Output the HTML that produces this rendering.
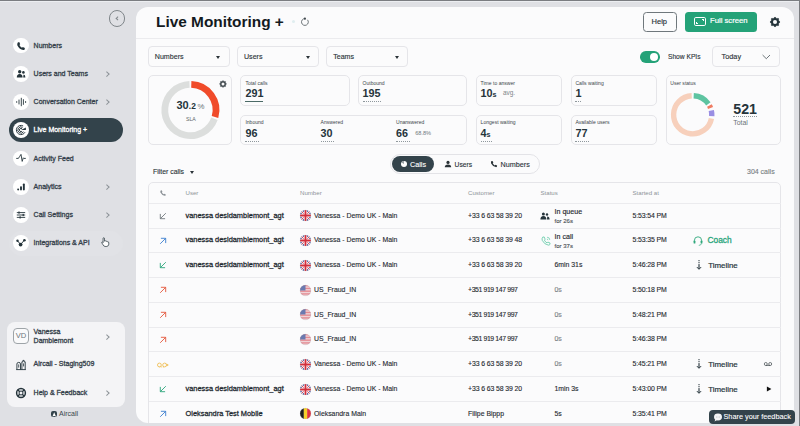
<!DOCTYPE html>
<html><head><meta charset="utf-8">
<style>
*{box-sizing:border-box;margin:0;padding:0}
html,body{width:800px;height:426px;overflow:hidden}
body{background:#dfe0e4;font-family:"Liberation Sans",sans-serif;color:#1f2a30;position:relative}
.a{position:absolute;white-space:nowrap}
svg.a{overflow:visible}
#topline{left:0;top:0;width:800px;height:1.1px;background:#7b7d81}
#topline2{left:0;top:1.1px;width:800px;height:1.2px;background:#eceef1}
.nav{left:13.1px;width:15.8px;height:15.8px;border-radius:50%;background:#fff}
.navt{left:33.6px;font-size:7px;color:#34404a;line-height:8px;-webkit-text-stroke:0.3px #34404a}
.chev{width:3.6px;height:3.6px;border-right:1px solid #8d9398;border-top:1px solid #8d9398;transform:rotate(45deg)}
#main{left:136px;top:6.5px;width:657.5px;height:416px;border-radius:12px;background:#fbfbfc;overflow:hidden}
#inner{left:-136px;top:-6.5px;width:800px;height:426px}
.dd{height:20.3px;border:1px solid #e5e5e9;border-radius:4px}
.ddt{font-size:7.1px;color:#2a3338;line-height:8px;-webkit-text-stroke:0.12px currentColor}
.caret{width:0;height:0;border-left:2.9px solid transparent;border-right:2.9px solid transparent;border-top:3px solid #2a3338}
.card{border:1px solid #e5e5e9;border-radius:5px}
.lbl{font-size:5.05px;color:#3c464b;line-height:6px}
.big{font-size:10.8px;font-weight:bold;color:#25343b;line-height:12px}
.dots{height:0;border-top:1px dotted #8f989d}
.th{font-size:6.1px;color:#8d9398;line-height:6px}
.td{font-size:6.9px;color:#1f2a30;line-height:8px;-webkit-text-stroke:0.12px #1f2a30}
.tdb{font-size:7.4px;color:#1f2a30;line-height:8px;-webkit-text-stroke:0.28px #1f2a30}
.rl{left:149px;width:632px;height:1px;background:#ebebee}
</style></head><body>
<div class="a" id="topline"></div><div class="a" id="topline2"></div>
<div class="a" style="left:9px;top:231px;width:114px;height:25px;border-radius:12.5px;background:#e1e2e6"></div>
<div class="a" style="left:108.5px;top:10.2px;width:16.5px;height:16.5px;border:1px solid #80868a;border-radius:50%"></div>
<div class="a" style="left:115.6px;top:16.7px;width:3.4px;height:3.4px;border-left:1px solid #80868a;border-bottom:1px solid #80868a;transform:rotate(45deg)"></div>
<div class="a nav" style="top:37.60px"></div>
<svg class="a" style="left:21px;top:45.50px" width="1" height="1"><path d="M-3.2,-3.6 L-1.8,-3.9 L-0.8,-1.7 L-1.6,-0.9 Q-0.6,1.1 1.0,1.8 L1.8,1.0 L3.9,2.0 L3.6,3.4 Q3.2,4.0 2.2,3.9 Q-1.5,3.4 -3.6,-0.6 Q-4.1,-2.3 -3.2,-3.6Z" fill="#25343b"/></svg>
<div class="a navt" style="top:41.60px;color:#34404a;-webkit-text-stroke-color:#34404a">Numbers</div>
<div class="a nav" style="top:66.00px"></div>
<svg class="a" style="left:21px;top:73.90px" width="1" height="1"><circle cx="-1.3" cy="-2.2" r="1.7" fill="#25343b"/><circle cx="2.4" cy="-1.6" r="1.3" fill="#25343b"/><path d="M-4.2,3.6 Q-4.2,0 -1.3,0 Q1.6,0 1.6,3.6Z M2.2,3.6 Q2.4,1 2.6,0.6 Q4.4,0.8 4.4,3.6Z" fill="#25343b"/></svg>
<div class="a navt" style="top:70.00px;color:#34404a;-webkit-text-stroke-color:#34404a">Users and Teams</div>
<div class="a chev" style="left:104.8px;top:72.10px"></div>
<div class="a nav" style="top:94.30px"></div>
<svg class="a" style="left:21px;top:102.20px" width="1" height="1"><g stroke="#25343b" stroke-width="0.9" stroke-linecap="round"><line x1="-4.3" y1="-0.4" x2="-4.3" y2="0.4"/><line x1="-2" y1="-2" x2="-2" y2="2"/><line x1="0.3" y1="-3.8" x2="0.3" y2="3.8"/><line x1="2.4" y1="-2.4" x2="2.4" y2="2.4"/><line x1="4.6" y1="-0.5" x2="4.6" y2="0.5"/></g></svg>
<div class="a navt" style="top:98.30px;color:#34404a;-webkit-text-stroke-color:#34404a">Conversation Center</div>
<div class="a chev" style="left:104.8px;top:100.40px"></div>
<div class="a" style="left:9px;top:118.1px;width:113.7px;height:24.4px;border-radius:12.2px;background:#33434b"></div>
<div class="a nav" style="top:122.40px"></div>
<svg class="a" style="left:21px;top:130.30px" width="1" height="1"><g fill="none" stroke="#25343b" stroke-width="0.95"><path d="M2.16,-4.06 A4.6,4.6 0 1 0 4.06,2.16"/><path d="M1.64,-2.63 A3.1,3.1 0 1 0 2.54,1.78"/><path d="M1.03,-1.23 A1.6,1.6 0 1 0 1.13,1.13"/></g><path d="M0,0 L4.9,-2.5 L4.9,0.1Z" fill="#25343b"/></svg>
<div class="a navt" style="top:126.40px;color:#ffffff;-webkit-text-stroke-color:#ffffff">Live Monitoring +</div>
<div class="a nav" style="top:150.50px"></div>
<svg class="a" style="left:21px;top:158.40px" width="1" height="1"><path d="M-4.8,0.4 L-2.6,0.4 L-1.3,-1.6 L0,-3.6 L1.2,3.4 L2.3,-0.2 L2.9,0.4 L4.8,0.4" fill="none" stroke="#25343b" stroke-width="0.9" stroke-linejoin="round"/></svg>
<div class="a navt" style="top:154.50px;color:#34404a;-webkit-text-stroke-color:#34404a">Activity Feed</div>
<div class="a nav" style="top:178.80px"></div>
<svg class="a" style="left:21px;top:186.70px" width="1" height="1"><g fill="#25343b"><rect x="-3.8" y="1.4" width="1.9" height="2" rx="0.8"/><rect x="-0.95" y="-0.8" width="1.9" height="4.2" rx="0.8"/><rect x="1.9" y="-3.6" width="1.9" height="7" rx="0.8"/></g></svg>
<div class="a navt" style="top:182.80px;color:#34404a;-webkit-text-stroke-color:#34404a">Analytics</div>
<div class="a chev" style="left:104.8px;top:184.90px"></div>
<div class="a nav" style="top:207.10px"></div>
<svg class="a" style="left:21px;top:215.00px" width="1" height="1"><g stroke="#25343b" stroke-width="0.9"><line x1="-4.2" y1="-2.4" x2="4.2" y2="-2.4"/><line x1="-4.2" y1="0" x2="4.2" y2="0"/><line x1="-4.2" y1="2.4" x2="4.2" y2="2.4"/></g><g fill="#25343b"><rect x="-2.6" y="-3.5" width="1.2" height="2.2"/><rect x="1.6" y="-1.1" width="1.2" height="2.2"/><rect x="-1.5" y="1.3" width="1.2" height="2.2"/></g></svg>
<div class="a navt" style="top:211.10px;color:#34404a;-webkit-text-stroke-color:#34404a">Call Settings</div>
<div class="a chev" style="left:104.8px;top:213.20px"></div>
<div class="a nav" style="top:235.40px"></div>
<svg class="a" style="left:21px;top:243.30px" width="1" height="1"><g stroke="#25343b" stroke-width="1"><line x1="-3.5" y1="-2.2" x2="-0.4" y2="1.4"/><line x1="-0.4" y1="1.4" x2="3.4" y2="-2.8"/></g><g fill="#25343b"><circle cx="-3.5" cy="-2.2" r="1.2"/><circle cx="-0.4" cy="1.6" r="1.9"/><circle cx="3.4" cy="-2.8" r="1.3"/></g></svg>
<div class="a navt" style="top:239.40px;color:#34404a;-webkit-text-stroke-color:#34404a">Integrations &amp; API</div>
<svg class="a" style="left:100.8px;top:237.2px" width="9.2" height="10" viewBox="0 0 10 11"><path d="M2.2,1.2 Q3,0.4 3.7,1.2 L3.8,4.6 L4.6,4.2 Q5.4,4.1 5.6,4.8 Q6.4,4.3 7,5.1 Q7.8,4.8 8.3,5.6 L8.6,7.8 Q8.4,10 6.4,10.4 L4.4,10.4 Q2.9,10.2 2.2,8.6 L0.8,6.4 Q0.5,5.6 1.3,5.4 Q1.9,5.4 2.3,6.2Z" fill="#fff" stroke="#25343b" stroke-width="0.8"/></svg>
<div class="a" style="left:7px;top:322px;width:117.6px;height:84.6px;border-radius:8px;background:#f4f4f6"></div>
<div class="a" style="left:13.4px;top:328.3px;width:15.4px;height:16px;border:0.8px solid #9ea4a8;border-radius:4px;background:#fafafb;font-size:7.6px;color:#6d767b;text-align:center;line-height:14.6px">VD</div>
<div class="a navt" style="left:33.6px;top:327.2px;line-height:9px">Vanessa<br>Damblemont</div>
<div class="a chev" style="left:104.8px;top:334.6px"></div>
<svg class="a" style="left:21px;top:364.6px" width="1" height="1"><g fill="none" stroke="#25343b" stroke-width="0.9"><path d="M-4.8,4.6 L4.8,4.6"/><path d="M-4.1,4.6 L-4.1,-1 Q-4.1,-2.6 -2.3,-2.6 Q-0.5,-2.6 -0.5,-1 L-0.5,4.6"/><path d="M0.9,4.6 L0.9,-3.2 L1.9,-3.2 L1.9,-4.6 L3.1,-4.6 L3.1,-3.2 L4.2,-3.2 L4.2,4.6"/><path d="M-2.3,-0.6 V2.6 M2.55,-1.6 V1.4" stroke-width="0.8"/></g></svg>
<div class="a navt" style="left:33.6px;top:360.1px;">Aircall - Staging509</div>
<svg class="a" style="left:21px;top:392.9px" width="1" height="1"><circle r="4.4" fill="none" stroke="#25343b" stroke-width="1.5"/><circle r="2" fill="none" stroke="#25343b" stroke-width="1"/><g stroke="#25343b" stroke-width="1.4"><line x1="-3.2" y1="-3.2" x2="-1.3" y2="-1.3"/><line x1="3.2" y1="-3.2" x2="1.3" y2="-1.3"/><line x1="-3.2" y1="3.2" x2="-1.3" y2="1.3"/><line x1="3.2" y1="3.2" x2="1.3" y2="1.3"/></g></svg>
<div class="a navt" style="left:33.6px;top:388.6px;">Help &amp; Feedback</div>
<div class="a chev" style="left:104.8px;top:391.1px"></div>
<div class="a" style="left:50.6px;top:410.5px;width:6.4px;height:6.8px;border-radius:2px;background:#33434b"></div>
<svg class="a" style="left:50.6px;top:410.5px" width="6.4" height="6.8" viewBox="0 0 6.4 6.8"><path d="M1.4,5.4 L3.2,1.3 L5,5.4 Q3.2,4.6 1.4,5.4Z" fill="#fff"/></svg>
<div class="a " style="left:59px;top:410.3px;font-size:7px;color:#3a454b;line-height:8px">Aircall</div>
<div class="a" id="main"><div class="a" id="inner">
<div class="a" style="left:136px;top:38px;width:657.5px;height:1px;background:#ebebee"></div>
<div class="a " style="left:156px;top:12.7px;font-size:15.4px;font-weight:bold;color:#141a1e;line-height:18px">Live Monitoring +</div>
<div class="a" style="left:292.2px;top:20.4px;width:3px;height:3px;border-radius:50%;background:#e0eef0"></div>
<svg class="a" style="left:304.7px;top:21.9px" width="1" height="1"><path d="M2.5,-2.2 A3.4,3.4 0 1 1 -0.3,-3.4" fill="none" stroke="#555d62" stroke-width="0.85"/><circle cx="-0.1" cy="-3.3" r="1.1" fill="#40494e"/></svg>
<div class="a" style="left:643px;top:11.6px;width:34px;height:20px;border:1px solid #6f777c;border-radius:3.5px"></div>
<div class="a " style="left:651.6px;top:17.7px;font-size:7.5px;color:#2a3338;line-height:8px;-webkit-text-stroke:0.15px #2a3338">Help</div>
<div class="a" style="left:685px;top:11.6px;width:72px;height:20px;border-radius:3.5px;background:#24a278"></div>
<div class="a" style="left:694.2px;top:17.2px;width:11.8px;height:9px;border:0.8px solid #fff;border-radius:1.8px"></div>
<div class="a" style="left:701.6px;top:18.6px;width:2.4px;height:2.4px;border-right:0.8px solid #fff;border-top:0.8px solid #fff"></div>
<div class="a" style="left:695.6px;top:22px;width:2.2px;height:2.2px;border-left:0.8px solid #fff;border-bottom:0.8px solid #fff"></div>
<div class="a " style="left:710px;top:17.4px;font-size:7.7px;color:#fff;line-height:8px;-webkit-text-stroke:0.2px #fff">Full screen</div>
<svg class="a" style="left:775.1px;top:21.5px" width="1" height="1"><path d="M0.00,-5.00 L1.49,-3.60 L3.54,-3.54 L3.60,-1.49 L5.00,0.00 L3.60,1.49 L3.54,3.54 L1.49,3.60 L0.00,5.00 L-1.49,3.60 L-3.54,3.54 L-3.60,1.49 L-5.00,0.00 L-3.60,-1.49 L-3.54,-3.54 L-1.49,-3.60Z" fill="#25343b" stroke="#25343b" stroke-width="0.6" stroke-linejoin="round"/><circle r="2.05" fill="#fbfbfc"/></svg>
<div class="a dd" style="left:147.8px;top:46.3px;width:81.8px"></div>
<div class="a ddt" style="left:154.8px;top:52.6px;">Numbers</div>
<div class="a caret" style="left:216.1px;top:55.8px"></div>
<div class="a dd" style="left:237px;top:46.3px;width:82px"></div>
<div class="a ddt" style="left:244px;top:52.6px;">Users</div>
<div class="a caret" style="left:305.5px;top:55.8px"></div>
<div class="a dd" style="left:326.2px;top:46.3px;width:82px"></div>
<div class="a ddt" style="left:333.2px;top:52.6px;">Teams</div>
<div class="a caret" style="left:394.7px;top:55.8px"></div>
<div class="a" style="left:639.6px;top:51px;width:20.4px;height:11.6px;border-radius:5.8px;background:#24a278"></div>
<div class="a" style="left:649.8px;top:52.6px;width:8.5px;height:8.5px;border-radius:50%;background:#fff"></div>
<div class="a ddt" style="left:668px;top:52.6px;font-size:6.65px">Show KPIs</div>
<div class="a dd" style="left:712.4px;top:46.3px;width:68px"></div>
<div class="a ddt" style="left:721.6px;top:52.6px;font-size:7.3px">Today</div>
<svg class="a" style="left:0;top:0" width="800" height="100"><path d="M762.6,55 L766.3,58.7 L770,55" fill="none" stroke="#4a5459" stroke-width="0.8"/></svg>
<div class="a card" style="left:148.4px;top:75px;width:84px;height:70.3px"></div>
<div class="a card" style="left:240.3px;top:74.8px;width:109.4px;height:31px"></div>
<div class="a card" style="left:358px;top:74.8px;width:109.3px;height:31px"></div>
<div class="a card" style="left:476px;top:74.8px;width:86.2px;height:31px"></div>
<div class="a card" style="left:570.8px;top:74.8px;width:86.2px;height:31px"></div>
<div class="a card" style="left:666px;top:75px;width:114.8px;height:70.3px"></div>
<div class="a card" style="left:240.3px;top:114.6px;width:227px;height:30.7px"></div>
<div class="a card" style="left:476px;top:114.6px;width:86.2px;height:30.7px"></div>
<div class="a card" style="left:570.8px;top:114.6px;width:86.2px;height:30.7px"></div>
<div class="a lbl" style="left:245.4px;top:79.6px;">Total calls</div>
<div class="a big" style="left:245.4px;top:87.39999999999999px;">291</div>
<div class="a" style="left:245.4px;top:101.1px;width:18px;height:1.1px;background:#4b6a67"></div>
<div class="a lbl" style="left:362.5px;top:79.6px;">Outbound</div>
<div class="a big" style="left:362.5px;top:87.39999999999999px;">195</div>
<div class="a dots" style="left:362.5px;top:101.1px;width:18.5px"></div>
<div class="a lbl" style="left:480.6px;top:79.6px;">Time to answer</div>
<div class="a big" style="left:480.6px;top:87.4px;">10<span style="font-size:7.2px">s</span></div>
<div class="a " style="left:503px;top:88.6px;font-size:6.4px;color:#7d8489;line-height:8px">avg.</div>
<div class="a lbl" style="left:575.4px;top:79.6px;">Calls waiting</div>
<div class="a big" style="left:575.4px;top:87.39999999999999px;">1</div>
<div class="a dots" style="left:575.4px;top:101.1px;width:5.5px"></div>
<div class="a lbl" style="left:670.3px;top:79.8px;">User status</div>
<div class="a lbl" style="left:245.4px;top:119.2px;">Inbound</div>
<div class="a big" style="left:245.4px;top:127.0px;">96</div>
<div class="a dots" style="left:245.4px;top:140.7px;width:13.5px"></div>
<div class="a lbl" style="left:320.6px;top:119.2px;">Answered</div>
<div class="a big" style="left:320.6px;top:127.0px;">30</div>
<div class="a dots" style="left:320.6px;top:140.7px;width:13.5px"></div>
<div class="a lbl" style="left:396px;top:119.2px;">Unanswered</div>
<div class="a big" style="left:396px;top:127.0px;">66</div>
<div class="a dots" style="left:396px;top:140.7px;width:13.5px"></div>
<div class="a " style="left:415.2px;top:129.6px;font-size:5.6px;color:#6f777c;line-height:7px">68.8%</div>
<div class="a lbl" style="left:480.6px;top:119.2px;">Longest waiting</div>
<div class="a big" style="left:480.6px;top:127px;">4<span style="font-size:7.2px">s</span></div>
<div class="a dots" style="left:480.6px;top:140.7px;width:11px"></div>
<div class="a lbl" style="left:575.4px;top:119.2px;">Available users</div>
<div class="a big" style="left:575.4px;top:127.0px;">77</div>
<div class="a dots" style="left:575.4px;top:140.7px;width:13.5px"></div>
<svg class="a" style="left:0;top:0" width="800" height="426"><path d="M191.29,84.42 A25.6,25.6 0 0 1 215.01,117.06" fill="none" stroke="#f04b2a" stroke-width="6.8"/><path d="M214.46,118.76 A25.6,25.6 0 1 1 189.51,84.42" fill="none" stroke="#dcdedd" stroke-width="6.8"/><path d="M693.70,95.73 A19.1,19.1 0 0 1 708.35,103.84" fill="none" stroke="#5ec4a1" stroke-width="5.4"/><path d="M709.41,105.54 A19.1,19.1 0 0 1 710.53,107.96" fill="none" stroke="#ef7d63" stroke-width="5.4"/><path d="M711.31,110.50 A19.1,19.1 0 0 1 711.75,116.13" fill="none" stroke="#9a8ee3" stroke-width="5.4"/><path d="M711.45,118.44 A19.1,19.1 0 1 1 691.70,95.73" fill="none" stroke="#f7d0bc" stroke-width="5.4"/></svg>
<div class="a big" style="left:176.4px;top:99.4px;font-size:11px">30<span style="font-size:8.4px;letter-spacing:0.2px">.2</span><span style="font-size:7.8px;font-weight:normal;color:#6a7378;margin-left:1.4px">%</span></div>
<div class="a " style="left:186px;top:116.4px;font-size:5.2px;color:#5d666b;line-height:6px">SLA</div>
<svg class="a" style="left:223.4px;top:83.5px" width="1" height="1"><path d="M0.00,-3.60 L1.05,-2.54 L2.55,-2.55 L2.54,-1.05 L3.60,0.00 L2.54,1.05 L2.55,2.55 L1.05,2.54 L0.00,3.60 L-1.05,2.54 L-2.55,2.55 L-2.54,1.05 L-3.60,0.00 L-2.54,-1.05 L-2.55,-2.55 L-1.05,-2.54Z" fill="#40494e" stroke="#40494e" stroke-width="0.4" stroke-linejoin="round"/><circle r="1.5" fill="#fbfbfc"/></svg>
<div class="a big" style="left:733.3px;top:102px;font-size:14.2px;line-height:15px">521</div>
<div class="a dots" style="left:733.3px;top:116.4px;width:24px"></div>
<div class="a " style="left:733.3px;top:119.4px;font-size:6.9px;color:#6a7378;line-height:7px">Total</div>
<div class="a" style="left:389.7px;top:153.6px;width:150.6px;height:20.7px;border:1px solid #e3e3e7;border-radius:10.4px"></div>
<div class="a" style="left:391.9px;top:156px;width:42.1px;height:16.4px;border-radius:8.2px;background:#33434b"></div>
<svg class="a" style="left:403.8px;top:164px" width="1" height="1"><circle r="3" fill="#fff"/><path d="M0,0 L0,-3 A3,3 0 0 0 -2.6,-1.5Z" fill="#33434b" opacity="0.5"/></svg>
<div class="a ddt" style="left:410px;top:160.6px;color:#fff;font-size:7.2px">Calls</div>
<svg class="a" style="left:448px;top:164px" width="1" height="1"><circle cy="-1.6" r="1.6" fill="#2a3338"/><path d="M-3.2,3.2 Q-3.2,0.4 0,0.4 Q3.2,0.4 3.2,3.2Z" fill="#2a3338"/></svg>
<div class="a ddt" style="left:454.6px;top:160.6px;font-size:6.7px">Users</div>
<svg class="a" style="left:494.1px;top:164px" width="1" height="1"><g transform="scale(0.8)"><path d="M-3.2,-3.6 L-1.8,-3.9 L-0.8,-1.7 L-1.6,-0.9 Q-0.6,1.1 1.0,1.8 L1.8,1.0 L3.9,2.0 L3.6,3.4 Q3.2,4.0 2.2,3.9 Q-1.5,3.4 -3.6,-0.6 Q-4.1,-2.3 -3.2,-3.6Z" fill="#2a3338"/></g></svg>
<div class="a ddt" style="left:500.6px;top:160.6px;font-size:7.2px">Numbers</div>
<div class="a ddt" style="left:153px;top:168.2px;font-size:6.9px">Filter calls</div>
<div class="a caret" style="left:189.8px;top:170.6px"></div>
<div class="a ddt" style="left:747px;top:168.2px;font-size:7px;color:#777e83">304 calls</div>
<div class="a" style="left:148.3px;top:182.3px;width:632.7px;height:260px;border:1px solid #e5e5e9;border-radius:5px"></div>
<svg class="a" style="left:163px;top:192.8px" width="1" height="1"><g transform="scale(0.72)"><path d="M-3.2,-3.6 L-1.8,-3.9 L-0.8,-1.7 L-1.6,-0.9 Q-0.6,1.1 1.0,1.8 L1.8,1.0 L3.9,2.0 L3.6,3.4 Q3.2,4.0 2.2,3.9 Q-1.5,3.4 -3.6,-0.6 Q-4.1,-2.3 -3.2,-3.6Z" fill="#8d9398"/></g></svg>
<div class="a th" style="left:185.5px;top:189.6px;">User</div>
<div class="a th" style="left:300px;top:189.6px;">Number</div>
<div class="a th" style="left:468px;top:189.6px;">Customer</div>
<div class="a th" style="left:540.5px;top:189.6px;">Status</div>
<div class="a th" style="left:632.5px;top:189.6px;">Started at</div>
<div class="a rl" style="top:202.75px"></div>
<div class="a rl" style="top:227.50px"></div>
<div class="a rl" style="top:252.25px"></div>
<div class="a rl" style="top:277.00px"></div>
<div class="a rl" style="top:301.75px"></div>
<div class="a rl" style="top:326.50px"></div>
<div class="a rl" style="top:351.25px"></div>
<div class="a rl" style="top:376.00px"></div>
<div class="a rl" style="top:400.75px"></div>
<svg class="a" style="left:163px;top:215.88px" width="1" height="1"><path d="M2.8,-2.8 L-2.7,2.7 M-2.7,-2.1 L-2.7,2.7 L2.1,2.7" fill="none" stroke="#70787d" stroke-width="0.9"/></svg>
<div class="a tdb" style="left:185.5px;top:211.575px;">vanessa desidamblemont_agt</div>
<svg class="a" style="left:299.70px;top:210.38px" width="11" height="11" viewBox="0 0 20 20"><defs><clipPath id="cuk215"><circle cx="10" cy="10" r="10"/></clipPath></defs><g clip-path="url(#cuk215)"><rect width="20" height="20" fill="#2b3f8c"/><path d="M0,0 L20,20 M20,0 L0,20" stroke="#fff" stroke-width="4"/><path d="M0,0 L20,20 M20,0 L0,20" stroke="#d22f3c" stroke-width="1.6"/><path d="M10,0 V20 M0,10 H20" stroke="#fff" stroke-width="6"/><path d="M10,0 V20 M0,10 H20" stroke="#d22f3c" stroke-width="3.4"/></g><circle cx="10" cy="10" r="9.6" fill="none" stroke="#9aa0a6" stroke-opacity="0.45" stroke-width="0.8"/></svg>
<div class="a td" style="left:314px;top:211.575px;">Vanessa - Demo UK - Main</div>
<div class="a td" style="left:468px;top:211.575px;letter-spacing:-0.11px">+33 6 63 58 39 20</div>
<svg class="a" style="left:545.3px;top:215.88px" width="1" height="1"><g fill="#25343b"><circle cx="-1.6" cy="-1.9" r="1.5"/><circle cx="2" cy="-1.5" r="1.2"/><path d="M-4.6,3.6 Q-4.6,0 -1.6,0 Q1.4,0 1.4,3.6Z M2,3.6 L2.2,0.5 Q4.6,0.5 4.6,3.6Z"/></g></svg>
<div class="a td" style="left:554.6px;top:208.175px;font-size:7.07px;-webkit-text-stroke:0.15px #1f2a30">In queue</div>
<div class="a td" style="left:554.6px;top:216.975px;font-size:6px;color:#5d666b">for 26s</div>
<div class="a td" style="left:632.5px;top:211.575px;letter-spacing:-0.1px">5:53:54 PM</div>
<svg class="a" style="left:163px;top:240.62px" width="1" height="1"><path d="M-2.8,2.8 L2.7,-2.7 M-2.1,-2.7 L2.7,-2.7 L2.7,2.1" fill="none" stroke="#3c7fd0" stroke-width="0.9"/></svg>
<div class="a tdb" style="left:185.5px;top:236.325px;">vanessa desidamblemont_agt</div>
<svg class="a" style="left:299.70px;top:235.12px" width="11" height="11" viewBox="0 0 20 20"><defs><clipPath id="cuk240"><circle cx="10" cy="10" r="10"/></clipPath></defs><g clip-path="url(#cuk240)"><rect width="20" height="20" fill="#2b3f8c"/><path d="M0,0 L20,20 M20,0 L0,20" stroke="#fff" stroke-width="4"/><path d="M0,0 L20,20 M20,0 L0,20" stroke="#d22f3c" stroke-width="1.6"/><path d="M10,0 V20 M0,10 H20" stroke="#fff" stroke-width="6"/><path d="M10,0 V20 M0,10 H20" stroke="#d22f3c" stroke-width="3.4"/></g><circle cx="10" cy="10" r="9.6" fill="none" stroke="#9aa0a6" stroke-opacity="0.45" stroke-width="0.8"/></svg>
<div class="a td" style="left:314px;top:236.325px;">Vanessa - Demo UK - Main</div>
<div class="a td" style="left:468px;top:236.325px;letter-spacing:-0.11px">+33 6 63 58 39 48</div>
<svg class="a" style="left:545.5px;top:240.62px" width="1" height="1"><g transform="scale(1.05)"><path d="M-3.2,-3.6 L-1.8,-3.9 L-0.8,-1.7 L-1.6,-0.9 Q-0.6,1.1 1.0,1.8 L1.8,1.0 L3.9,2.0 L3.6,3.4 Q3.2,4.0 2.2,3.9 Q-1.5,3.4 -3.6,-0.6 Q-4.1,-2.3 -3.2,-3.6Z" fill="none" stroke="#4cc39a" stroke-width="0.7"/><path d="M1,-3.6 A2.6,2.6 0 0 1 3.6,-1 M0.8,-1.8 A1,1 0 0 1 1.8,-0.8" fill="none" stroke="#4cc39a" stroke-width="0.6"/></g></svg>
<div class="a td" style="left:554.6px;top:232.925px;font-size:7.07px;-webkit-text-stroke:0.15px #1f2a30">In call</div>
<div class="a td" style="left:554.6px;top:241.725px;font-size:6px;color:#5d666b">for 37s</div>
<div class="a td" style="left:632.5px;top:236.325px;letter-spacing:-0.1px">5:53:35 PM</div>
<svg class="a" style="left:698.2px;top:240.62px" width="1" height="1"><path d="M-3.6,1 L-3.6,-0.6 A3.6,3.6 0 0 1 3.6,-0.6 L3.6,1" fill="none" stroke="#2fa87c" stroke-width="0.9"/><rect x="-4.4" y="-0.4" width="1.8" height="3" rx="0.6" fill="#2fa87c"/><rect x="2.6" y="-0.4" width="1.8" height="3" rx="0.6" fill="#2fa87c"/><path d="M3.5,2.6 Q3.2,4.2 0.8,4.4" fill="none" stroke="#2fa87c" stroke-width="0.7"/></svg>
<div class="a td" style="left:707.5px;top:236.125px;font-size:8.4px;color:#2aa57b;line-height:9px;-webkit-text-stroke:0.3px #2aa57b">Coach</div>
<svg class="a" style="left:163px;top:265.38px" width="1" height="1"><path d="M2.8,-2.8 L-2.7,2.7 M-2.7,-2.1 L-2.7,2.7 L2.1,2.7" fill="none" stroke="#2aa57b" stroke-width="0.9"/></svg>
<div class="a tdb" style="left:185.5px;top:261.075px;">vanessa desidamblemont_agt</div>
<svg class="a" style="left:299.70px;top:259.88px" width="11" height="11" viewBox="0 0 20 20"><defs><clipPath id="cuk265"><circle cx="10" cy="10" r="10"/></clipPath></defs><g clip-path="url(#cuk265)"><rect width="20" height="20" fill="#2b3f8c"/><path d="M0,0 L20,20 M20,0 L0,20" stroke="#fff" stroke-width="4"/><path d="M0,0 L20,20 M20,0 L0,20" stroke="#d22f3c" stroke-width="1.6"/><path d="M10,0 V20 M0,10 H20" stroke="#fff" stroke-width="6"/><path d="M10,0 V20 M0,10 H20" stroke="#d22f3c" stroke-width="3.4"/></g><circle cx="10" cy="10" r="9.6" fill="none" stroke="#9aa0a6" stroke-opacity="0.45" stroke-width="0.8"/></svg>
<div class="a td" style="left:314px;top:261.075px;">Vanessa - Demo UK - Main</div>
<div class="a td" style="left:468px;top:261.075px;letter-spacing:-0.11px">+33 6 63 58 39 20</div>
<div class="a td" style="left:554.4px;top:261.075px;">6min 31s</div>
<div class="a td" style="left:632.5px;top:261.075px;letter-spacing:-0.1px">5:46:28 PM</div>
<svg class="a" style="left:698.5px;top:265.38px" width="1" height="1"><g fill="#25343b"><rect x="-0.55" y="-4.9" width="1.1" height="1.1"/><rect x="-0.55" y="-2.9" width="1.1" height="1.1"/><rect x="-0.55" y="-0.9" width="1.1" height="4.6"/></g><path d="M-2.1,2.1 L0,4.3 L2.1,2.1" fill="none" stroke="#25343b" stroke-width="1"/></svg>
<div class="a td" style="left:708.2px;top:260.875px;font-size:7.9px;color:#25343b;line-height:9px;-webkit-text-stroke:0.2px #25343b">Timeline</div>
<svg class="a" style="left:163px;top:290.12px" width="1" height="1"><path d="M-2.8,2.8 L2.7,-2.7 M-2.1,-2.7 L2.7,-2.7 L2.7,2.1" fill="none" stroke="#e4573c" stroke-width="0.9"/></svg>
<svg class="a" style="left:299.70px;top:284.62px" width="11" height="11" viewBox="0 0 20 20"><defs><clipPath id="cus290"><circle cx="10" cy="10" r="10"/></clipPath></defs><g clip-path="url(#cus290)"><rect width="20" height="20" fill="#f4eeee"/><rect y="0.00" width="20" height="1.43" fill="#e0707a"/><rect y="2.86" width="20" height="1.43" fill="#e0707a"/><rect y="5.72" width="20" height="1.43" fill="#e0707a"/><rect y="8.58" width="20" height="1.43" fill="#e0707a"/><rect y="11.44" width="20" height="1.43" fill="#e0707a"/><rect y="14.30" width="20" height="1.43" fill="#e0707a"/><rect y="17.16" width="20" height="1.43" fill="#e0707a"/><rect width="10" height="10" fill="#6a79b0"/></g><circle cx="10" cy="10" r="9.6" fill="none" stroke="#9aa0a6" stroke-opacity="0.45" stroke-width="0.8"/></svg>
<div class="a td" style="left:314px;top:285.825px;">US_Fraud_IN</div>
<div class="a td" style="left:468px;top:285.825px;letter-spacing:-0.39px">+351 919 147 997</div>
<div class="a td" style="left:554.4px;top:285.825px;color:#9aa0a4">0s</div>
<div class="a td" style="left:632.5px;top:285.825px;letter-spacing:-0.1px">5:50:18 PM</div>
<svg class="a" style="left:163px;top:314.88px" width="1" height="1"><path d="M-2.8,2.8 L2.7,-2.7 M-2.1,-2.7 L2.7,-2.7 L2.7,2.1" fill="none" stroke="#e4573c" stroke-width="0.9"/></svg>
<svg class="a" style="left:299.70px;top:309.38px" width="11" height="11" viewBox="0 0 20 20"><defs><clipPath id="cus314"><circle cx="10" cy="10" r="10"/></clipPath></defs><g clip-path="url(#cus314)"><rect width="20" height="20" fill="#f4eeee"/><rect y="0.00" width="20" height="1.43" fill="#e0707a"/><rect y="2.86" width="20" height="1.43" fill="#e0707a"/><rect y="5.72" width="20" height="1.43" fill="#e0707a"/><rect y="8.58" width="20" height="1.43" fill="#e0707a"/><rect y="11.44" width="20" height="1.43" fill="#e0707a"/><rect y="14.30" width="20" height="1.43" fill="#e0707a"/><rect y="17.16" width="20" height="1.43" fill="#e0707a"/><rect width="10" height="10" fill="#6a79b0"/></g><circle cx="10" cy="10" r="9.6" fill="none" stroke="#9aa0a6" stroke-opacity="0.45" stroke-width="0.8"/></svg>
<div class="a td" style="left:314px;top:310.575px;">US_Fraud_IN</div>
<div class="a td" style="left:468px;top:310.575px;letter-spacing:-0.39px">+351 919 147 997</div>
<div class="a td" style="left:554.4px;top:310.575px;color:#9aa0a4">0s</div>
<div class="a td" style="left:632.5px;top:310.575px;letter-spacing:-0.1px">5:48:21 PM</div>
<svg class="a" style="left:163px;top:339.62px" width="1" height="1"><path d="M-2.8,2.8 L2.7,-2.7 M-2.1,-2.7 L2.7,-2.7 L2.7,2.1" fill="none" stroke="#e4573c" stroke-width="0.9"/></svg>
<svg class="a" style="left:299.70px;top:334.12px" width="11" height="11" viewBox="0 0 20 20"><defs><clipPath id="cus339"><circle cx="10" cy="10" r="10"/></clipPath></defs><g clip-path="url(#cus339)"><rect width="20" height="20" fill="#f4eeee"/><rect y="0.00" width="20" height="1.43" fill="#e0707a"/><rect y="2.86" width="20" height="1.43" fill="#e0707a"/><rect y="5.72" width="20" height="1.43" fill="#e0707a"/><rect y="8.58" width="20" height="1.43" fill="#e0707a"/><rect y="11.44" width="20" height="1.43" fill="#e0707a"/><rect y="14.30" width="20" height="1.43" fill="#e0707a"/><rect y="17.16" width="20" height="1.43" fill="#e0707a"/><rect width="10" height="10" fill="#6a79b0"/></g><circle cx="10" cy="10" r="9.6" fill="none" stroke="#9aa0a6" stroke-opacity="0.45" stroke-width="0.8"/></svg>
<div class="a td" style="left:314px;top:335.325px;">US_Fraud_IN</div>
<div class="a td" style="left:468px;top:335.325px;letter-spacing:-0.39px">+351 919 147 997</div>
<div class="a td" style="left:554.4px;top:335.325px;color:#9aa0a4">0s</div>
<div class="a td" style="left:632.5px;top:335.325px;letter-spacing:-0.1px">5:46:38 PM</div>
<svg class="a" style="left:163px;top:364.68px" width="1" height="1"><g fill="none" stroke="#efc058" stroke-width="0.9"><circle cx="-3.6" cy="0" r="1.9"/><circle cx="1.6" cy="0" r="1.9"/><line x1="-3.6" y1="1.9" x2="1.6" y2="1.9" stroke-dasharray="1 0.8"/></g><path d="M3.6,-1.4 L5.8,0 L3.6,1.4Z" fill="#efc058"/></svg>
<svg class="a" style="left:299.70px;top:358.88px" width="11" height="11" viewBox="0 0 20 20"><defs><clipPath id="cuk364"><circle cx="10" cy="10" r="10"/></clipPath></defs><g clip-path="url(#cuk364)"><rect width="20" height="20" fill="#2b3f8c"/><path d="M0,0 L20,20 M20,0 L0,20" stroke="#fff" stroke-width="4"/><path d="M0,0 L20,20 M20,0 L0,20" stroke="#d22f3c" stroke-width="1.6"/><path d="M10,0 V20 M0,10 H20" stroke="#fff" stroke-width="6"/><path d="M10,0 V20 M0,10 H20" stroke="#d22f3c" stroke-width="3.4"/></g><circle cx="10" cy="10" r="9.6" fill="none" stroke="#9aa0a6" stroke-opacity="0.45" stroke-width="0.8"/></svg>
<div class="a td" style="left:314px;top:360.075px;">Vanessa - Demo UK - Main</div>
<div class="a td" style="left:468px;top:360.075px;letter-spacing:-0.11px">+33 6 63 58 39 20</div>
<div class="a td" style="left:554.4px;top:360.075px;color:#9aa0a4">0s</div>
<div class="a td" style="left:632.5px;top:360.075px;letter-spacing:-0.1px">5:45:21 PM</div>
<svg class="a" style="left:698.5px;top:364.38px" width="1" height="1"><g fill="#25343b"><rect x="-0.55" y="-4.9" width="1.1" height="1.1"/><rect x="-0.55" y="-2.9" width="1.1" height="1.1"/><rect x="-0.55" y="-0.9" width="1.1" height="4.6"/></g><path d="M-2.1,2.1 L0,4.3 L2.1,2.1" fill="none" stroke="#25343b" stroke-width="1"/></svg>
<div class="a td" style="left:708.2px;top:359.875px;font-size:7.9px;color:#25343b;line-height:9px;-webkit-text-stroke:0.2px #25343b">Timeline</div>
<svg class="a" style="left:768px;top:363.88px" width="1" height="1"><g fill="none" stroke="#40494e" stroke-width="0.7"><circle cx="-2.2" cy="0" r="1.5"/><circle cx="2.2" cy="0" r="1.5"/><line x1="-2.2" y1="1.5" x2="2.2" y2="1.5"/></g></svg>
<svg class="a" style="left:163px;top:389.12px" width="1" height="1"><path d="M2.8,-2.8 L-2.7,2.7 M-2.7,-2.1 L-2.7,2.7 L2.1,2.7" fill="none" stroke="#2aa57b" stroke-width="0.9"/></svg>
<div class="a tdb" style="left:185.5px;top:384.825px;">vanessa desidamblemont_agt</div>
<svg class="a" style="left:299.70px;top:383.62px" width="11" height="11" viewBox="0 0 20 20"><defs><clipPath id="cuk389"><circle cx="10" cy="10" r="10"/></clipPath></defs><g clip-path="url(#cuk389)"><rect width="20" height="20" fill="#2b3f8c"/><path d="M0,0 L20,20 M20,0 L0,20" stroke="#fff" stroke-width="4"/><path d="M0,0 L20,20 M20,0 L0,20" stroke="#d22f3c" stroke-width="1.6"/><path d="M10,0 V20 M0,10 H20" stroke="#fff" stroke-width="6"/><path d="M10,0 V20 M0,10 H20" stroke="#d22f3c" stroke-width="3.4"/></g><circle cx="10" cy="10" r="9.6" fill="none" stroke="#9aa0a6" stroke-opacity="0.45" stroke-width="0.8"/></svg>
<div class="a td" style="left:314px;top:384.825px;">Vanessa - Demo UK - Main</div>
<div class="a td" style="left:468px;top:384.825px;letter-spacing:-0.11px">+33 6 63 58 39 20</div>
<div class="a td" style="left:554.4px;top:384.825px;">1min 3s</div>
<div class="a td" style="left:632.5px;top:384.825px;letter-spacing:-0.1px">5:43:00 PM</div>
<svg class="a" style="left:698.5px;top:389.12px" width="1" height="1"><g fill="#25343b"><rect x="-0.55" y="-4.9" width="1.1" height="1.1"/><rect x="-0.55" y="-2.9" width="1.1" height="1.1"/><rect x="-0.55" y="-0.9" width="1.1" height="4.6"/></g><path d="M-2.1,2.1 L0,4.3 L2.1,2.1" fill="none" stroke="#25343b" stroke-width="1"/></svg>
<div class="a td" style="left:708.2px;top:384.625px;font-size:7.9px;color:#25343b;line-height:9px;-webkit-text-stroke:0.2px #25343b">Timeline</div>
<svg class="a" style="left:768.5px;top:388.82px" width="1" height="1"><path d="M-2.1,-2.6 L2.4,0 L-2.1,2.6Z" fill="#111"/></svg>
<svg class="a" style="left:163px;top:413.88px" width="1" height="1"><path d="M-2.8,2.8 L2.7,-2.7 M-2.1,-2.7 L2.7,-2.7 L2.7,2.1" fill="none" stroke="#3c7fd0" stroke-width="0.9"/></svg>
<div class="a tdb" style="left:185.5px;top:409.575px;">Oleksandra Test Mobile</div>
<svg class="a" style="left:299.70px;top:408.38px" width="11" height="11" viewBox="0 0 20 20"><defs><clipPath id="cbe413"><circle cx="10" cy="10" r="10"/></clipPath></defs><g clip-path="url(#cbe413)"><rect width="7" height="20" fill="#1d1d1d"/><rect x="7" width="6" height="20" fill="#f5cf2a"/><rect x="13" width="7" height="20" fill="#e0333f"/></g><circle cx="10" cy="10" r="9.6" fill="none" stroke="#9aa0a6" stroke-opacity="0.45" stroke-width="0.8"/></svg>
<div class="a td" style="left:314px;top:409.575px;">Oleksandra Main</div>
<div class="a td" style="left:468px;top:409.575px;letter-spacing:0px">Filipe Bippp</div>
<div class="a td" style="left:554.4px;top:409.575px;">5s</div>
<div class="a td" style="left:632.5px;top:409.575px;letter-spacing:-0.1px">5:35:41 PM</div>
</div></div>
<div class="a" style="left:709.2px;top:410.4px;width:86.3px;height:13.9px;border-radius:4px;background:#33434b"></div>
<svg class="a" style="left:717.9px;top:416.6px" width="1" height="1"><ellipse rx="4" ry="3.4" fill="#f3f4f5"/><path d="M-2.6,2 L-3.4,4.4 L-0.6,2.8Z" fill="#f3f4f5"/><g fill="#9aa3a8"><circle cx="-1.6" r="0.45"/><circle cx="0" r="0.45"/><circle cx="1.6" r="0.45"/></g></svg>
<div class="a " style="left:723.5px;top:412.8px;font-size:7.3px;color:#fff;line-height:8px;-webkit-text-stroke:0.08px #fff">Share your feedback</div>
<div class="a" style="left:798.6px;top:0;width:1.4px;height:426px;background:#7b7d81"></div>
</body></html>
